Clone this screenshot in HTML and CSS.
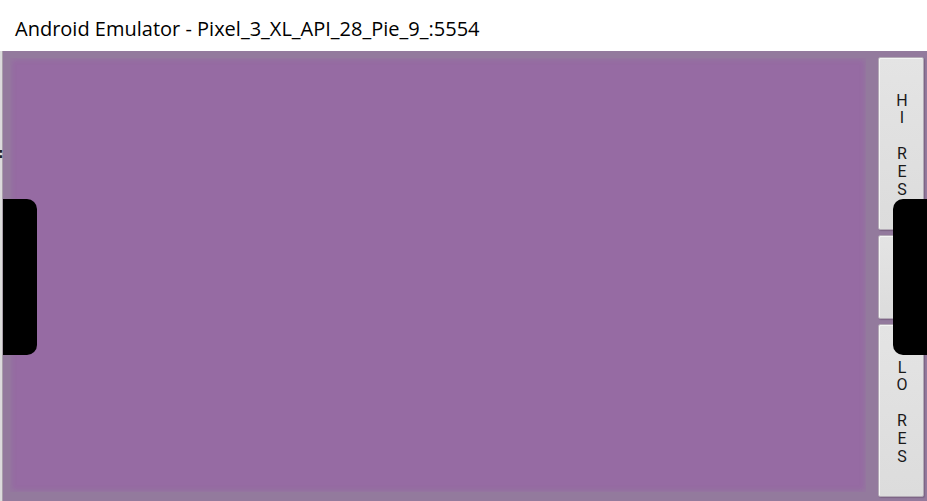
FILE: index.html
```html
<!DOCTYPE html>
<html>
<head>
<meta charset="utf-8">
<link rel="stylesheet" href="styles.css">
</head>
<body>
<div class="window">
  <div class="titlebar">Android Emulator - Pixel_3_XL_API_28_Pie_9_:5554</div>
  <div class="main">
    <div class="edge"><span class="edge-glyph">:</span></div>
    <div class="frame">
      <div class="screen"></div>
      <div class="side">
        <button class="btn btn-tall"><span>H<br>I<br><br>R<br>E<br>S</span></button>
        <button class="btn btn-mid"></button>
        <button class="btn btn-tall"><span>L<br>O<br><br>R<br>E<br>S</span></button>
      </div>
    </div>
    <div class="notch notch-left"></div>
    <div class="notch notch-right"></div>
  </div>
</div>
</body>
</html>
```
FILE: styles.css
```css
html, body {
  margin: 0;
  padding: 0;
  width: 927px;
  height: 501px;
  overflow: hidden;
  background: #ffffff;
}
.window {
  width: 927px;
  height: 501px;
  display: flex;
  flex-direction: column;
}
.titlebar {
  height: 52px;
  box-sizing: border-box;
  padding-left: 15px;
  padding-top: 15px;
  font-family: "Open Sans", "Noto Sans", sans-serif;
  font-size: 20px;
  line-height: 28px;
  color: #000;
  background: #fff;
  white-space: nowrap;
}
.main {
  position: relative;
  flex: 1;
  display: flex;
  background: #937a9d;
}
.edge {
  width: 3px;
  background: linear-gradient(to right, #dcdcdc 0 2px, #a9a0ab 2px 3px);
  position: relative;
  overflow: hidden;
}
.edge-glyph {
  position: absolute;
  left: -2px;
  top: 94px;
  font-family: "DejaVu Sans", sans-serif;
  font-size: 14px;
  font-weight: bold;
  color: #222;
}
.frame {
  flex: 1;
  display: flex;
  padding: 7px 3px 9px 7px;
}
.screen {
  flex: 1;
  background: #966ba3;
  box-shadow: inset 0 0 4px 2px rgba(148, 122, 157, 0.8);
}
.side {
  width: 46px;
  margin-left: 12px;
  display: flex;
  flex-direction: column;
  gap: 5px;
  margin-top: -1px;
  margin-bottom: -5px;
}
.btn {
  margin: 0;
  padding: 0;
  border: 1px solid #b3aab6;
  border-radius: 2px;
  background: linear-gradient(to bottom, #e4e4e4, #dcdcdc);
  box-shadow: inset 1px 1px 0 #f4f4f4, 1px 1px 1px rgba(80, 60, 90, 0.35);
  display: flex;
  align-items: center;
  justify-content: center;
  font-family: Roboto, "Noto Sans", sans-serif;
  font-size: 16px;
  line-height: 17.8px;
  color: #1a1a1a;
  text-align: center;
}
.btn span {
  display: block;
  padding-left: 2px;
  padding-top: 3px;
}
.btn-tall {
  height: 173px;
}
.btn-mid {
  height: 84px;
}
.notch {
  position: absolute;
  background: #000;
  top: 148px;
  height: 156px;
}
.notch-left {
  left: 3px;
  width: 34px;
  border-radius: 0 10px 10px 0;
}
.notch-right {
  right: 0;
  width: 34px;
  border-radius: 10px 0 0 10px;
}
```
